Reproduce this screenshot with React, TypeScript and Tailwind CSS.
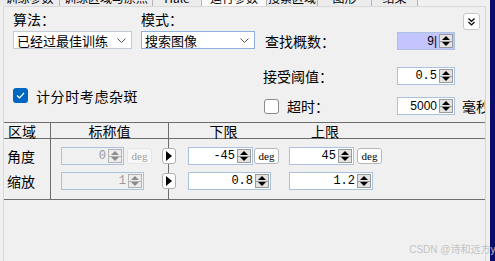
const cjk = "font-['Noto_Sans_CJK_SC','Noto_Sans',sans-serif]";
const mono = "font-['Liberation_Mono','DejaVu_Sans_Mono',monospace]";

const tabs = [
  { label: "训练参数", w: "w-[60px]", on: false },
  { label: "训练区域与原点", w: "w-[93px]", on: false },
  { label: "Hale", w: "w-[49px]", on: false },
  { label: "运行参数", w: "w-[65px]", on: true },
  { label: "搜索区域", w: "w-[51px]", on: false },
  { label: "图形", w: "w-[54px]", on: false },
  { label: "结果", w: "w-[46px]", on: false },
];

function Arrows({ dim = false }: { dim?: boolean }) {
  const fill = dim ? "#8c8c8c" : "#000";
  return (
    <div className={`mr-px my-px flex w-[14px] flex-col border ${dim ? "border-[#b4b4b4] bg-[#ececec]" : "border-[#9a9a9a] bg-[#e3e3e3]"}`}>
      <div className={`flex flex-1 items-center justify-center border-b ${dim ? "border-[#b4b4b4]" : "border-[#9a9a9a]"}`}>
        <svg width="8" height="4" viewBox="0 0 8 4"><path d="M0 4 L4 0 L8 4 Z" fill={fill} /></svg>
      </div>
      <div className="flex flex-1 items-center justify-center">
        <svg width="8" height="4" viewBox="0 0 8 4"><path d="M0 0 L4 4 L8 0 Z" fill={fill} /></svg>
      </div>
    </div>
  );
}

function SpinBox({ value, w, dim = false, bg = "bg-white", font = mono }: { value: string; w: string; dim?: boolean; bg?: string; font?: string }) {
  return (
    <div className={`flex h-[18px] flex-none border border-[#a9c2e0] ${bg} ${w}`}>
      <div className={`flex flex-1 items-center justify-end pr-[2px] text-[12px] leading-none ${font} ${dim ? "text-[#9a9a9a]" : "text-black"}`}>
        {value}
      </div>
      <Arrows dim={dim} />
    </div>
  );
}

function Deg({ dim = false }: { dim?: boolean }) {
  return (
    <div
      className={`flex h-[16px] w-[25px] flex-none items-center justify-center rounded-[3px] border text-[11px] leading-none font-['Liberation_Serif',serif] ${
        dim ? "border-[#e6e6e6] bg-[#f7f7f7] text-[#a0a0a0]" : "border-[#b8b8b8] bg-white text-black"
      }`}
    >
      deg
    </div>
  );
}

function Play() {
  return (
    <div className="relative -ml-[7px] flex h-[16px] w-[14px] flex-none items-center justify-center rounded-[3px] border border-[#b0b0b0] bg-white">
      <svg width="6" height="10" viewBox="0 0 6 10"><path d="M0 0 L6 5 L0 10 Z" fill="#000" /></svg>
    </div>
  );
}

function Select({ value, w, blue = false }: { value: string; w: string; blue?: boolean }) {
  return (
    <div className={`flex h-[18px] flex-none items-center justify-between border bg-white pl-[3px] pr-[5px] ${w} ${blue ? "border-[#8fb2dd]" : "border-[#c4cbd4]"}`}>
      <span className={`text-[13px] leading-none text-black ${cjk}`}>{value}</span>
      <svg width="9" height="5" viewBox="0 0 9 5"><path d="M0.5 0.5 L4.5 4.5 L8.5 0.5" fill="none" stroke="#555" strokeWidth="1" /></svg>
    </div>
  );
}

export default function App() {
  return (
    <div className={`relative flex h-[261px] w-[495px] overflow-hidden bg-[#f0f0f0] ${cjk}`}>
      <div className="flex w-[490px] flex-none flex-col">
        <div className="flex h-[6px] overflow-hidden">
          {tabs.map((t) => (
            <div
              key={t.label}
              className={`flex h-[6px] flex-none justify-center overflow-hidden border-r border-[#b4b4b4] ${t.w} ${t.on ? "bg-[#fafafa]" : "bg-[#ececec]"}`}
            >
              <span className="-mt-[10px] whitespace-nowrap text-[12px] leading-[16px] text-black">{t.label}</span>
            </div>
          ))}
        </div>
        <div className="ml-[3px] flex w-[483px] flex-1 flex-col overflow-hidden border-l border-r border-t border-[#d9d9d9]">
          <div className="flex h-[115px]">
            <div className="flex w-[259px] flex-none flex-col pl-[9px]">
              <div className="mt-[4px] flex h-[16px] items-center">
                <span className="w-[128px] text-[14px] leading-none">算法：</span>
                <span className="text-[14px] leading-none">模式：</span>
              </div>
              <div className="mt-[4px] flex gap-[9px]">
                <Select value="已经过最佳训练" w="w-[119px]" />
                <Select value="搜索图像" w="w-[114px]" blue />
              </div>
              <div className="mt-[39px] flex items-center gap-[8px]">
                <div className="flex h-[15px] w-[15px] items-center justify-center rounded-[3px] bg-[#0067c0]">
                  <svg width="9" height="7" viewBox="0 0 9 7"><path d="M1 3.5 L3.5 6 L8 1" fill="none" stroke="#fff" strokeWidth="1.2" /></svg>
                </div>
                <span className="text-[14px] leading-none tracking-[0.6px]">计分时考虑杂斑</span>
              </div>
            </div>
            <div className="flex min-w-0 flex-1 flex-col overflow-hidden">
              <div className="mt-[6px] flex items-start">
                <div className="mt-[19px] flex w-[192px] flex-none items-center">
                  <span className="w-[134px] flex-none pl-[2px] text-[14px] leading-none">查找概数：</span>
                  <SpinBox value="9|" w="w-[58px]" bg="bg-[#c4c4ff]" font="font-['Liberation_Sans',sans-serif]" />
                </div>
                <div className="ml-[8px] flex h-[17px] w-[17px] flex-none items-center justify-center rounded-[3px] border border-[#c8c8c8] bg-white">
                  <svg width="7" height="8" viewBox="0 0 7 8"><path d="M0.5 0.5 L3.5 3.5 L6.5 0.5 M0.5 4 L3.5 7 L6.5 4" fill="none" stroke="#000" strokeWidth="1.2" /></svg>
                </div>
              </div>
              <div className="mt-[17px] flex items-center">
                <span className="w-[134px] flex-none text-[14px] leading-none">接受阈值：</span>
                <SpinBox value="0.5" w="w-[58px]" />
              </div>
              <div className="mt-[12px] flex items-center">
                <div className="ml-px h-[15px] w-[15px] flex-none rounded-[3px] border border-[#8a8a8a] bg-white" />
                <span className="ml-[8px] w-[110px] flex-none text-[14px] leading-none">超时：</span>
                <SpinBox value="5000" w="w-[58px]" font="font-['Liberation_Sans',sans-serif]" />
                <span className="ml-[7px] flex-none whitespace-nowrap text-[14px] leading-none">毫秒</span>
              </div>
            </div>
          </div>

          <div className="flex border-b border-t border-[#6e6e6e]">
            <div className="flex h-[15px] w-[47px] items-center border-r border-[#6e6e6e] pl-[4px] text-[14px] leading-none">区域</div>
            <div className="flex w-[118px] items-center justify-center border-r border-[#6e6e6e] text-[14px] leading-none">标称值</div>
            <div className="flex w-[109px] items-center justify-center text-[14px] leading-none">下限</div>
            <div className="flex w-[94px] items-center justify-center text-[14px] leading-none">上限</div>
          </div>

          <div className="flex h-[61px] border-b border-[#6e6e6e]">
            <div className="flex w-[47px] flex-col border-r border-[#6e6e6e] pl-[3px] pt-[8px]">
              <div className="flex h-[18px] items-center text-[14px] leading-none">角度</div>
              <div className="mt-[7px] flex h-[18px] items-center text-[14px] leading-none">缩放</div>
            </div>
            <div className="flex w-[118px] flex-col border-r border-[#6e6e6e] pl-[10px] pt-[8px]">
              <div className="flex h-[18px] items-center gap-[3px]">
                <SpinBox value="0" w="w-[63px]" dim bg="bg-[#f0f0f0]" />
                <Deg dim />
              </div>
              <div className="mt-[7px] flex h-[18px] items-center">
                <SpinBox value="1" w="w-[83px]" dim bg="bg-[#f0f0f0]" />
              </div>
            </div>
            <div className="flex flex-1 flex-col pt-[8px]">
              <div className="flex h-[18px] items-center">
                <Play />
                <div className="ml-[12px] flex w-[101px] flex-none items-center gap-[1px]">
                  <SpinBox value="-45" w="w-[65px]" />
                  <Deg />
                </div>
                <div className="flex items-center gap-[3px]">
                  <SpinBox value="45" w="w-[65px]" />
                  <Deg />
                </div>
              </div>
              <div className="mt-[7px] flex h-[18px] items-center">
                <Play />
                <div className="ml-[12px] w-[101px] flex-none">
                  <SpinBox value="0.8" w="w-[83px]" />
                </div>
                <SpinBox value="1.2" w="w-[84px]" />
              </div>
            </div>
          </div>
        </div>
      </div>
      <div className="w-[5px] flex-none bg-[#0c0c6a]" />
      <div className="absolute bottom-[6px] right-[-6px] whitespace-nowrap text-[10px] leading-none text-[#c4c4c4] font-['Liberation_Sans','Noto_Sans_CJK_SC',sans-serif]">
        CSDN @诗和远方ya
      </div>
    </div>
  );
}
